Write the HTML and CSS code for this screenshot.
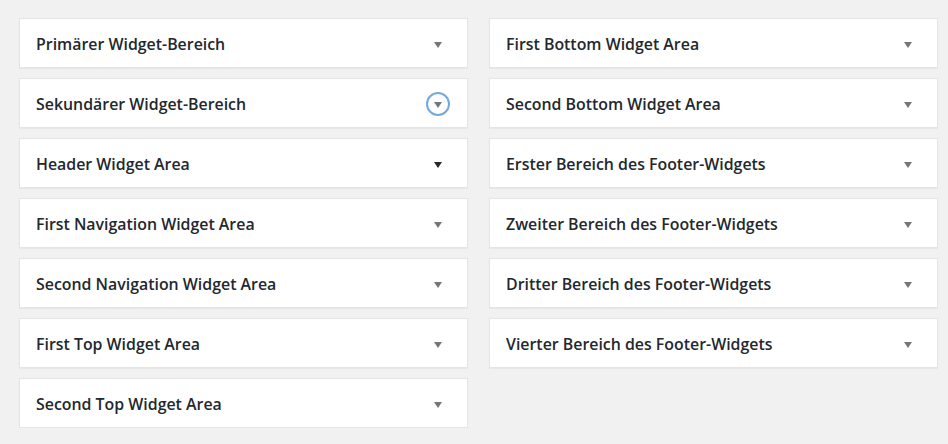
FILE: index.html
```html
<!DOCTYPE html>
<html lang="de">
<head>
<meta charset="utf-8">
<link rel="stylesheet" href="styles.css">
</head>
<body>
<div class="areas">
  <div class="col">
    <div class="sidebar"><h2>Primärer Widget-Bereich</h2><span class="toggle"><span class="arrow"></span></span></div>
    <div class="sidebar"><h2>Sekundärer Widget-Bereich</h2><span class="toggle focus"><span class="arrow"></span></span></div>
    <div class="sidebar"><h2>Header Widget Area</h2><span class="toggle"><span class="arrow dark"></span></span></div>
    <div class="sidebar"><h2>First Navigation Widget Area</h2><span class="toggle"><span class="arrow"></span></span></div>
    <div class="sidebar"><h2>Second Navigation Widget Area</h2><span class="toggle"><span class="arrow"></span></span></div>
    <div class="sidebar"><h2>First Top Widget Area</h2><span class="toggle"><span class="arrow"></span></span></div>
    <div class="sidebar"><h2>Second Top Widget Area</h2><span class="toggle"><span class="arrow"></span></span></div>
  </div>
  <div class="col">
    <div class="sidebar"><h2>First Bottom Widget Area</h2><span class="toggle"><span class="arrow"></span></span></div>
    <div class="sidebar"><h2>Second Bottom Widget Area</h2><span class="toggle"><span class="arrow"></span></span></div>
    <div class="sidebar"><h2>Erster Bereich des Footer-Widgets</h2><span class="toggle"><span class="arrow"></span></span></div>
    <div class="sidebar"><h2>Zweiter Bereich des Footer-Widgets</h2><span class="toggle"><span class="arrow"></span></span></div>
    <div class="sidebar"><h2>Dritter Bereich des Footer-Widgets</h2><span class="toggle"><span class="arrow"></span></span></div>
    <div class="sidebar"><h2>Vierter Bereich des Footer-Widgets</h2><span class="toggle"><span class="arrow"></span></span></div>
  </div>
</div>
</body>
</html>
```
FILE: styles.css
```css
html, body {
  margin: 0;
  background: #f1f1f1;
}
body {
  font-family: "Open Sans", "Noto Sans", sans-serif;
  color: #23282d;
  padding: 18px 0 0 19px;
}
.areas {
  display: flex;
  gap: 21px;
  align-items: flex-start;
}
.col {
  width: 449px;
  display: flex;
  flex-direction: column;
  gap: 10px;
}
.sidebar {
  box-sizing: border-box;
  height: 50px;
  background: #fff;
  border: 1px solid #e5e5e5;
  box-shadow: 0 1px 1px rgba(0,0,0,0.04);
  display: flex;
  align-items: center;
  justify-content: space-between;
  padding: 1px 17px 0 16px;
}
.sidebar h2 {
  margin: 0;
  font-size: 15.9px;
  font-weight: 600;
  letter-spacing: 0;
}
.toggle {
  box-sizing: border-box;
  width: 24px;
  height: 24px;
  border-radius: 50%;
  display: flex;
  align-items: center;
  justify-content: center;
  border: 2px solid transparent;
}
.toggle.focus {
  border-color: #74a9dc;
}
.arrow {
  width: 0;
  height: 0;
  border-left: 4px solid transparent;
  border-right: 4px solid transparent;
  border-top: 6px solid #72777c;
  margin-top: 2px;
}
.arrow.dark {
  border-top-color: #23282d;
}
```
